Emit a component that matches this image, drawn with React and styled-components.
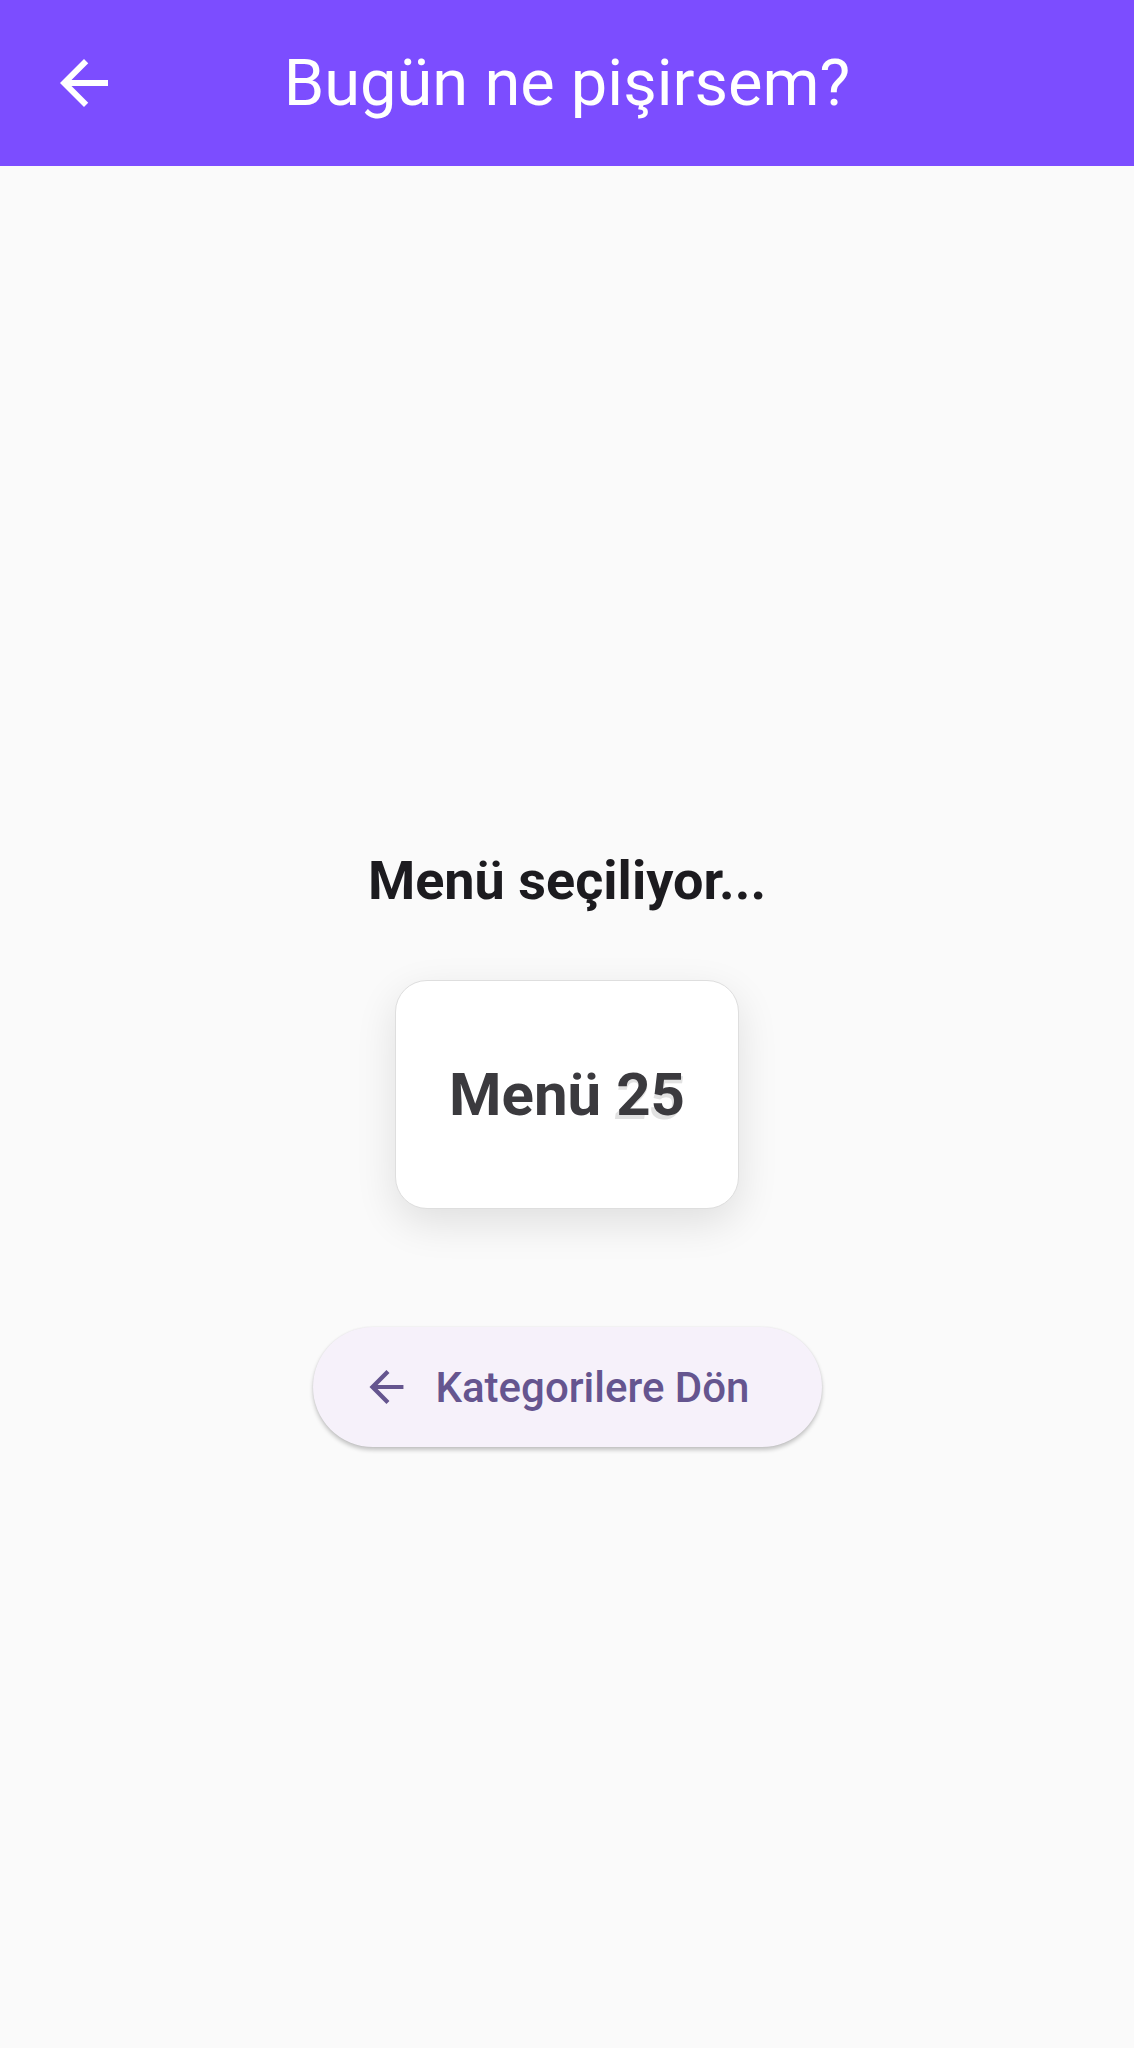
import React from 'react';
import styled, { createGlobalStyle } from 'styled-components';

const GlobalStyle = createGlobalStyle`
  html, body {
    margin: 0;
    padding: 0;
    background: #fafafa;
    font-family: Roboto, "Noto Sans", sans-serif;
  }
`;

const Screen = styled.div`
  min-height: 2048px;
  display: flex;
  flex-direction: column;
  background: #fafafa;
`;

const AppBar = styled.header`
  height: 166px;
  background: #7c4dff;
  display: flex;
  align-items: center;
  position: relative;
`;

const BackButton = styled.button`
  width: 168px;
  height: 166px;
  border: none;
  background: transparent;
  padding: 0;
  display: flex;
  align-items: center;
  justify-content: center;
  color: #ffffff;
  flex-shrink: 0;
`;

const Title = styled.h1`
  position: absolute;
  left: 0;
  right: 0;
  margin: 0;
  text-align: center;
  font-size: 65px;
  font-weight: 400;
  color: #ffffff;
  pointer-events: none;
`;

const Body = styled.main`
  flex: 1;
  display: flex;
  flex-direction: column;
  align-items: center;
  justify-content: center;
  padding-top: 82px;
`;

const Heading = styled.div`
  font-size: 54px;
  font-weight: 700;
  line-height: 63px;
  color: #1c1b1f;
`;

const Card = styled.div`
  margin-top: 68px;
  width: 344px;
  height: 229px;
  box-sizing: border-box;
  border: 1.5px solid #dedede;
  border-radius: 32px;
  background: #ffffff;
  box-shadow: 0 14px 42px rgba(0, 0, 0, 0.11);
  display: flex;
  align-items: center;
  justify-content: center;
`;

const CardText = styled.div`
  font-size: 60px;
  font-weight: 700;
  color: #3b3a3e;
  display: flex;
`;

const Number = styled.span`
  position: relative;
  margin-left: 0.25em;
`;

const Ghost = styled.span`
  position: absolute;
  left: -1px;
  top: 4px;
  color: #e2e2e2;
  transform: skewX(-8deg);
`;

const NumberFront = styled.span`
  position: relative;
`;

const PillButton = styled.button`
  margin-top: 118px;
  height: 120px;
  width: 509px;
  box-sizing: border-box;
  padding: 0 72px 0 48px;
  border: none;
  border-radius: 60px;
  background: #f6f1fa;
  box-shadow: 0 3px 4px rgba(0, 0, 0, 0.22), 0 0 2px rgba(0, 0, 0, 0.08);
  display: flex;
  align-items: center;
  gap: 24px;
  color: #65558f;
  font-family: Roboto, "Noto Sans", sans-serif;
  font-size: 42px;
  font-weight: 500;
  white-space: nowrap;
`;

const ArrowBack = ({ size }) => (
  <svg width={size} height={size} viewBox="0 0 24 24" fill="currentColor">
    <path d="M20 11H7.83l5.59-5.59L12 4l-8 8 8 8 1.41-1.41L7.83 13H20v-2z" />
  </svg>
);

const App = () => (
  <>
    <GlobalStyle />
    <Screen>
      <AppBar>
        <BackButton>
          <ArrowBack size={72} />
        </BackButton>
        <Title>Bugün ne pişirsem?</Title>
      </AppBar>
      <Body>
        <Heading>Menü seçiliyor...</Heading>
        <Card>
          <CardText>
            Menü
            <Number>
              <Ghost>25</Ghost>
              <NumberFront>25</NumberFront>
            </Number>
          </CardText>
        </Card>
        <PillButton>
          <ArrowBack size={54} />
          Kategorilere Dön
        </PillButton>
      </Body>
    </Screen>
  </>
);

export default App;
